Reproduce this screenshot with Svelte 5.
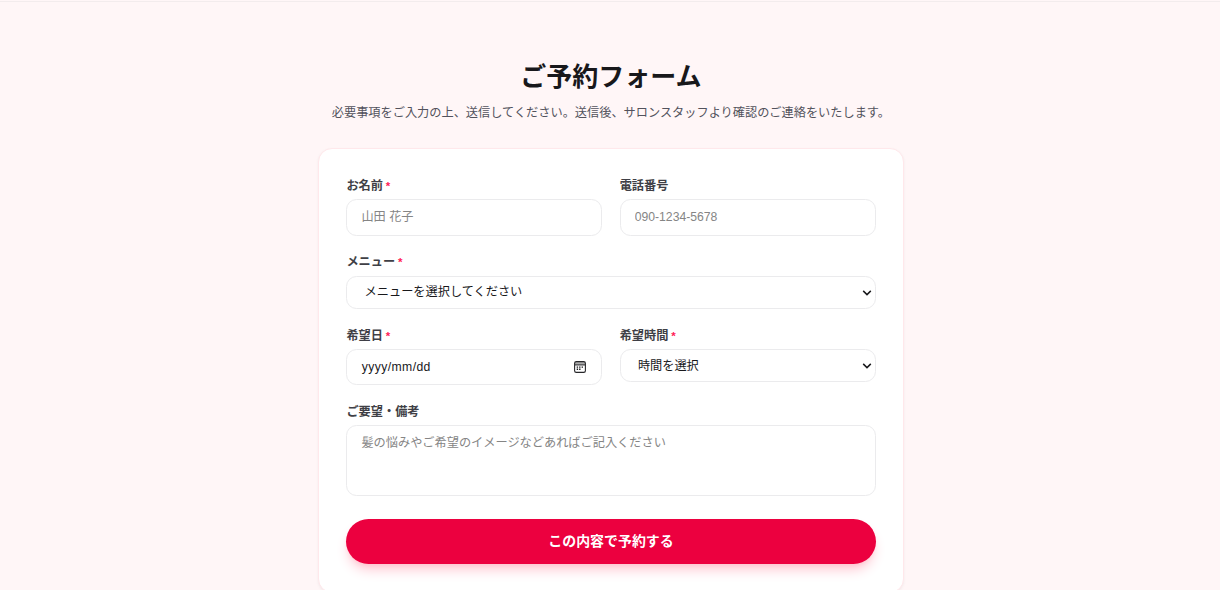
<script>
  let name = $state('');
  let phone = $state('');
  let note = $state('');
</script>

{#snippet chevron()}
  <svg class="chevron" viewBox="0 0 10 6" aria-hidden="true"><path d="M1.2 .9 5 4.6 8.8 .9" /></svg>
{/snippet}

<section>
  <header>
    <h1>ご予約フォーム</h1>
    <p>必要事項をご入力の上、送信してください。送信後、サロンスタッフより確認のご連絡をいたします。</p>
  </header>
  <form onsubmit={(e) => e.preventDefault()}>
    <div class="row">
      <div class="field">
        <label for="name">お名前 <span>*</span></label>
        <input id="name" class="control" placeholder="山田 花子" bind:value={name} />
      </div>
      <div class="field">
        <label for="phone">電話番号</label>
        <input id="phone" class="control" placeholder="090-1234-5678" bind:value={phone} />
      </div>
    </div>
    <div class="field">
      <label for="menu">メニュー <span>*</span></label>
      <button type="button" id="menu" class="control select">メニューを選択してください{@render chevron()}</button>
    </div>
    <div class="row">
      <div class="field">
        <label for="date">希望日 <span>*</span></label>
        <button type="button" id="date" class="control date">
          <span>yyyy/mm/dd</span>
          <svg class="calendar" viewBox="0 0 12 12" aria-hidden="true">
            <path class="band" d="M1 1h10v2.6H1z" />
            <rect x=".6" y=".6" width="10.8" height="10.8" rx="1.7" />
            <path d="M1 3.9h10" />
            <path class="dots" d="M5.1 5.4h1.4v1.3H5.1zM7.6 5.4H9v1.3H7.6zM2.7 7.6h1.4v1.3H2.7zM5.1 7.6h1.4v1.3H5.1zM2.7 5.4h1.4v1.3H2.7z" />
          </svg>
        </button>
      </div>
      <div class="field">
        <label for="time">希望時間 <span>*</span></label>
        <button type="button" id="time" class="control select">時間を選択{@render chevron()}</button>
      </div>
    </div>
    <div class="field">
      <label for="note">ご要望・備考</label>
      <textarea id="note" class="control" placeholder="髪の悩みやご希望のイメージなどあればご記入ください" bind:value={note}></textarea>
    </div>
    <button class="submit">この内容で予約する</button>
  </form>
</section>

<style>
  :global(body) {
    background: #fff6f7;
    overflow: hidden;
  }
  section {
    box-sizing: border-box;
    height: 589px;
    overflow: hidden;
    border-top: 1px solid #f3eced;
    padding: 60px 0 0 1.8px;
    font-family: "Liberation Sans", "Noto Sans CJK JP", sans-serif;
    color: #18181b;
    margin-top: 1px;
  }
  header {
    text-align: center;
  }
  h1 {
    margin: 0;
    font-size: 26px;
    line-height: 31.4px;
    font-weight: 700;
  }
  p {
    margin: 11.5px 0 0;
    font-size: 12.2px;
    line-height: 17.4px;
    color: #52525c;
  }
  form {
    box-sizing: border-box;
    width: 586px;
    margin: 26px auto 0;
    padding: 27.3px 27.3px 27.6px 27.5px;
    display: flex;
    flex-direction: column;
    gap: 17.4px;
    background: #fff;
    border: 1px solid #ffe8eb;
    border-radius: 14px;
    box-shadow: 0 1px 3px rgba(0, 0, 0, 0.05);
  }
  .row {
    display: grid;
    grid-template-columns: 1fr 1fr;
    gap: 17.4px;
    align-items: start;
  }
  .field {
    display: flex;
    flex-direction: column;
    gap: 5.2px;
  }
  label {
    position: relative;
    top: 1.1px;
    font-size: 12.2px;
    line-height: 17.4px;
    font-weight: 700;
    color: #3f3f46;
  }
  label span {
    color: #ff2056;
    font-size: 11.5px;
    margin-left: -0.5px;
  }
  .control {
    box-sizing: border-box;
    width: 100%;
    height: 36.5px;
    margin: 0;
    padding: 0 14px;
    border: 1px solid #ebebed;
    border-radius: 10.5px;
    background: #fff;
    font: 12.2px "Liberation Sans", "Noto Sans CJK JP", sans-serif;
    color: #18181b;
    text-align: left;
    outline: none;
  }
  .control::placeholder {
    color: #858585;
    opacity: 1;
  }
  .select,
  .date {
    display: flex;
    align-items: center;
    justify-content: space-between;
  }
  .select {
    height: 33.4px;
    padding: 0 2.4px 2px 17.2px;
  }
  .date {
    height: 36px;
    padding-right: 15px;
  }
  .date span {
    letter-spacing: 0.4px;
    margin-left: 0.4px;
  }
  .chevron {
    width: 10px;
    height: 6px;
    margin-top: 3px;
    fill: none;
    stroke: #18181b;
    stroke-width: 1.5;
  }
  .calendar {
    width: 12px;
    height: 12px;
    fill: none;
    stroke: #27272a;
    stroke-width: 1.1;
  }
  .calendar .band {
    fill: #aaa;
    stroke: none;
  }
  .calendar .dots {
    fill: #18181b;
    stroke: none;
  }
  textarea.control {
    height: 70.7px;
    padding: 8.5px 14px;
    line-height: 17.4px;
    resize: none;
    margin-bottom: 5.8px;
  }
  .submit {
    height: 45.2px;
    padding: 0 0 2.6px;
    border: 0;
    border-radius: 23px;
    background: #ec003f;
    color: #fff;
    font: 700 13.94px "Liberation Sans", "Noto Sans CJK JP", sans-serif;
    box-shadow: 0 8px 13px -3px #ffc4cf, 0 3px 5px -3px #ffb8c6;
  }
</style>
